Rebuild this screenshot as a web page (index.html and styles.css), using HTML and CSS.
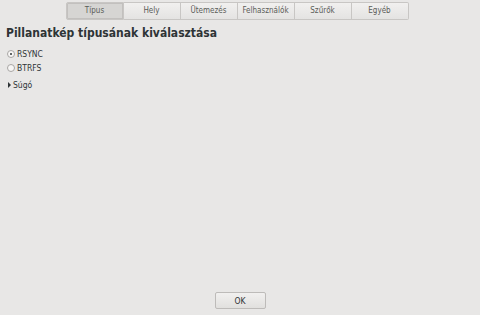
FILE: index.html
```html
<!DOCTYPE html>
<html lang="hu">

<head>
  <meta charset="UTF-8">
  <title>Pillanatkép típusa</title>
  <link rel="stylesheet" href="styles.css">
</head>

<body>
  <div class="window">
    <div class="tabs">
      <div class="tab active">Típus</div>
      <div class="tab">Hely</div>
      <div class="tab">Ütemezés</div>
      <div class="tab">Felhasználók</div>
      <div class="tab">Szűrők</div>
      <div class="tab">Egyéb</div>
    </div>

    <div class="content">
      <h2>Pillanatkép típusának kiválasztása</h2>
      <label class="radio"><span class="dot checked"></span>RSYNC</label>
      <label class="radio"><span class="dot"></span>BTRFS</label>
      <div class="expander"><span class="arrow"></span>Súgó</div>
    </div>

    <div class="footer">
      <button class="btn">OK</button>
    </div>
  </div>
</body>

</html>
```

FILE: styles.css
```css
html,
body {
  margin: 0;
  height: 100%;
}

body {
  background-color: #e8e7e6;
  font-family: "DejaVu Sans Condensed", "DejaVu Sans", sans-serif;
  font-stretch: condensed;
  color: #2e3436;
}

.window {
  display: flex;
  flex-direction: column;
  height: 100%;
}

.tabs {
  display: flex;
  justify-content: center;
  padding-top: 2px;
  margin-left: -6px;
}

.tab {
  width: 56px;
  height: 16px;
  line-height: 16px;
  font-size: 8px;
  text-align: center;
  color: #5a5c58;
  background: linear-gradient(#f1f0ef, #e4e3e2);
  border: 1px solid #c8c6c4;
  border-left: none;
}

.tab:first-child {
  border-left: 1px solid #c8c6c4;
  border-radius: 2px 0 0 2px;
}

.tab:last-child {
  border-radius: 0 2px 2px 0;
}

.tab.active {
  background: #d6d5d3;
  box-shadow: inset 0 0 0 1px #c2c0be;
}

.content {
  flex: 1;
  padding: 0 6px;
}

h2 {
  margin: 6px 0 6px;
  font-size: 12px;
  line-height: 15px;
  font-weight: bold;
  color: #2e3436;
}

.radio {
  display: flex;
  align-items: center;
  font-size: 8.5px;
  height: 14px;
}

.dot {
  width: 6px;
  height: 6px;
  border: 1px solid #a8a6a4;
  border-radius: 50%;
  background: #f7f6f5;
  margin: 0 2px 0 1px;
  position: relative;
}

.dot.checked::after {
  content: "";
  position: absolute;
  left: 2px;
  top: 2px;
  width: 2px;
  height: 2px;
  border-radius: 50%;
  background: #2e3436;
}

.expander {
  display: flex;
  align-items: center;
  font-size: 8.5px;
  margin: 5px 0 0 2px;
}

.arrow {
  width: 0;
  height: 0;
  border-top: 3px solid transparent;
  border-bottom: 3px solid transparent;
  border-left: 3px solid #2e3436;
  margin-right: 2px;
}

.footer {
  display: flex;
  justify-content: center;
  padding-bottom: 6px;
}

.btn {
  width: 51px;
  height: 17px;
  font-family: "DejaVu Sans Condensed", "DejaVu Sans", sans-serif;
  font-stretch: condensed;
  font-size: 8.5px;
  color: #2e3436;
  background: linear-gradient(#f1f0ef, #e1e0de);
  border: 1px solid #bdbbb9;
  border-radius: 2px;
  padding: 0;
}
```
